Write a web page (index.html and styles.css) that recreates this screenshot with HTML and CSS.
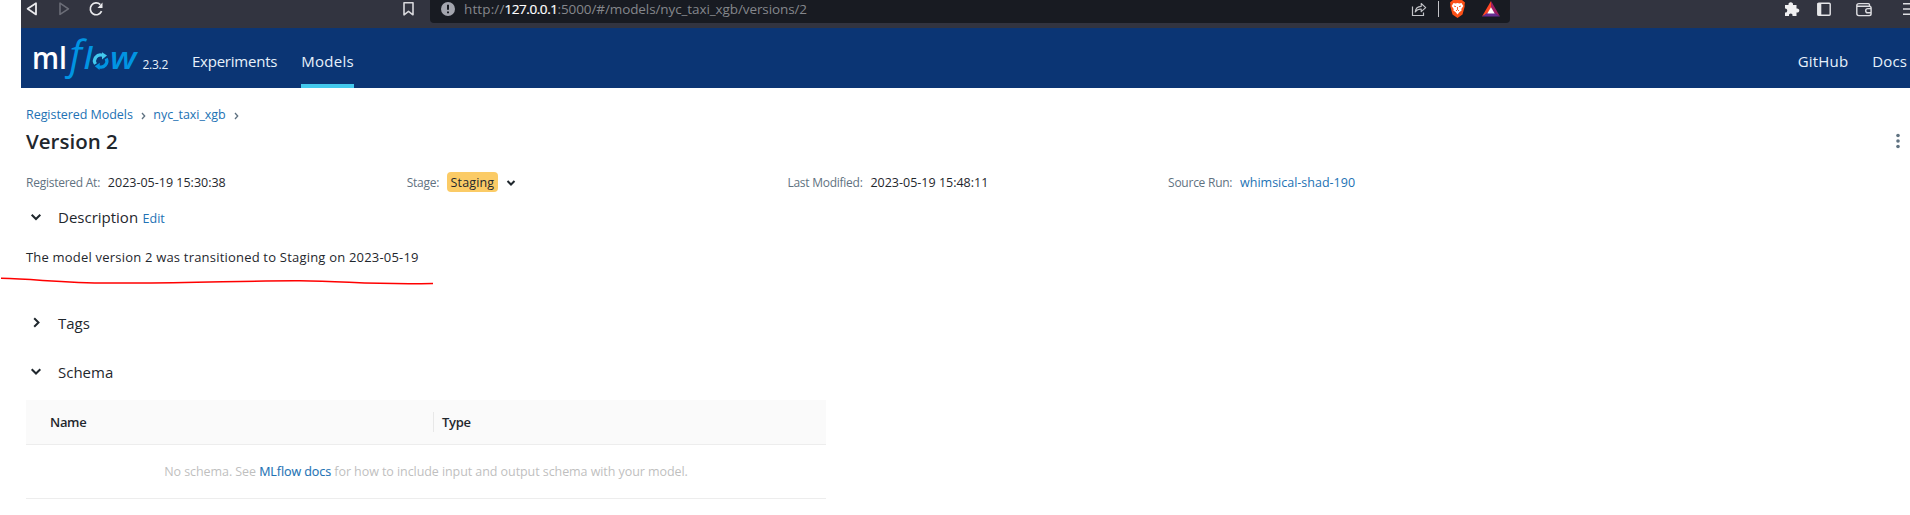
FILE: index.html
```html
<!DOCTYPE html>
<html lang="en">
<head>
<meta charset="utf-8">
<title>MLflow</title>
<link rel="stylesheet" href="styles.css">
</head>
<body>
<div class="app">
  <div class="browser">
    <svg class="browser-nav" width="409" height="28" viewBox="0 0 409 28" fill="none">
      <path d="M15 3.200v11.200L6.600 8.800z" stroke="#e9e9ec" stroke-width="1.800" stroke-linejoin="round"/>
      <path d="M39 3.200v11.200l8.400-5.600z" stroke="#6b6d77" stroke-width="1.600" stroke-linejoin="round"/>
      <path d="M79.300 4.600A5.900 5.900 0 1 0 80.600 11.200" stroke="#e9e9ec" stroke-width="1.700"/>
      <path d="M81.500 2.500v5.500h-5z" fill="#e9e9ec"/>
      <path d="M383 2.800h9v12l-4.500-3.500-4.500 3.500z" stroke="#d8d8dc" stroke-width="1.600" stroke-linejoin="round"/>
    </svg>
    <div class="address">
      <svg class="info" width="14" height="14" viewBox="0 0 14 14"><circle cx="7" cy="7" r="7" fill="#a3a5ae"/><path d="M7 2.800v5M7 9.500v1.800" stroke="#181b22" stroke-width="2"/></svg>
      <div class="url"><span class="t url-scheme">http://</span><span class="t url-host">127.0.0.1</span><span class="t url-path">:5000/#/models/nyc_taxi_xgb/versions/2</span></div>
      <svg class="address-icons" width="100" height="23" viewBox="0 0 100 23" fill="none">
        <path d="M2.500 6.500v9h11v-3" stroke="#c3c4c8" stroke-width="1.200"/>
        <path d="M5.200 12c.5-4 3-5.500 6-5.600V3.500l4.500 4.200-4.500 4V9c-2.500 0-4.500.8-6 3z" stroke="#c3c4c8" stroke-width="1.100" stroke-linejoin="round"/>
        <path d="M28.500 1v16" stroke="#c3c4c8"/>
        <path d="M43 0h9l3 2.500-.4 2 .1 2-2.200 8L47.500 18l-5-3.500-2.200-8 .1-2-.4-2z" fill="#fb5017"/>
        <path d="M43.500 3l2.200.4 1.800-.4 1.800.4 2.200-.4 1.800 3-2 3 .3 1.500-2.300 1.800-1.800 2.200-1.800-2.200-2.300-1.800.3-1.500-2-3z" fill="#fff"/>
        <path d="M44 6l2 .7M51 6l-2 .7M47.500 7v2.500L46 11M47.500 9.500L49 11" stroke="#fb5017" stroke-width=".9"/>
        <path d="M81 1l-9 15.500 9-5z" fill="#ff4724"/><path d="M81 1l9 15.500-9-5z" fill="#9e1f63"/><path d="M72 16.500h18l-9-6z" fill="#662d91"/><path d="M81 7.200l-3.700 6.300h7.400z" fill="#fff"/>
      </svg>
    </div>
    <svg class="browser-tools" width="130" height="28" viewBox="0 0 130 28" fill="none">
      <path d="M5 5h3.500c-.8-3.800 5.300-3.800 4.500 0h3.500v3.500c3.800-.5 3.800 4.500 0 4V16h-4c.5-3.200-4-3.200-3.500 0H5v-3.500c3 .5 3-4.500 0-4z" fill="#f0f0f2"/>
      <rect x="37.800" y="3.300" width="12.400" height="12" rx="1" stroke="#e6e6e9" stroke-width="1.400"/><path d="M37.500 3h3.800v12.500h-3.800z" fill="#e6e6e9"/>
      <path d="M89.500 6.500V4.800q0-1.200-1.200-1.200H79q-2.200 0-2.200 2v8q0 2 2 2h10.500q1.800 0 1.800-1.800V8q0-1.800-1.800-1.800H77.500" stroke="#dedee2" stroke-width="1.400"/><path d="M91 8.600h-3.200a2.100 2.100 0 0 0 0 4.200H91" stroke="#dedee2" stroke-width="1.400"/>
      <path d="M123 3.800h8M123 9h8M123 14.200h8" stroke="#dedee2" stroke-width="1.500"/>
    </svg>
  </div>

  <header class="header">
    <svg class="logo" width="106" height="60" viewBox="34 28 106 60">
      <text class="logo-ml" x="32" y="69" textLength="35" lengthAdjust="spacingAndGlyphs">ml</text>
      <text class="logo-f" x="69.500" y="69">f</text>
      <text class="logo-l" x="83.700" y="69">l</text>
      <g fill="none" stroke-width="3.200"><path d="M95.500 64A5.900 5.900 0 0 1 102.300 55.200" stroke="#43c9ed"/><path d="M106.200 58.500A5.900 5.900 0 0 1 98.800 66.700" stroke="#0194e2"/></g>
      <path d="M102 52.300l5 3.200-5 4z" fill="#43c9ed"/><path d="M99.500 70l-4.700-3.700 5-3.500z" fill="#0194e2"/>
      <text class="logo-w" x="110" y="69" textLength="26.500" lengthAdjust="spacingAndGlyphs">w</text>
    </svg>
    <span class="t release">2.3.2</span>
    <nav class="tabs"><a class="tab"><span class="t tab-exp">Experiments</span></a><a class="tab tab-active"><span class="t tab-models">Models</span></a></nav>
    <nav class="links"><span class="t link-gh">GitHub</span><span class="t link-docs">Docs</span></nav>
  </header>

  <main class="page">
    <div class="crumbs">
      <a class="t">Registered Models</a>
      <svg class="crumb-sep" width="5" height="8" viewBox="0 0 5 8"><path d="M1 1l2.700 3L1 7"/></svg>
      <a class="t">nyc_taxi_xgb</a>
      <svg class="crumb-sep" width="5" height="8" viewBox="0 0 5 8"><path d="M1 1l2.700 3L1 7"/></svg>
    </div>
    <div class="title-row">
      <h1 class="t title">Version 2</h1>
      <svg width="4" height="16" viewBox="0 0 4 16" fill="#5f7281"><circle cx="2" cy="2.500" r="1.800"/><circle cx="2" cy="8" r="1.800"/><circle cx="2" cy="13.500" r="1.800"/></svg>
    </div>
    <div class="meta">
      <div class="meta-item"><span class="t label">Registered At:</span><span class="t">2023-05-19 15:30:38</span></div>
      <div class="meta-item"><span class="t label">Stage:</span><span class="stage"><span class="t stage-text">Staging</span></span><svg class="chev" width="10" height="8" viewBox="0 0 10 8"><path d="M1.500 2L5 5.500 8.500 2"/></svg></div>
      <div class="meta-item"><span class="t label">Last Modified:</span><span class="t">2023-05-19 15:48:11</span></div>
      <div class="meta-item"><span class="t label">Source Run:</span><a class="t">whimsical-shad-190</a></div>
    </div>

    <div class="section section-desc"><svg class="chev" width="12" height="12" viewBox="0 0 12 12"><path d="M1.700 3.700L6 8l4.300-4.300"/></svg><span class="t">Description</span><a class="t edit">Edit</a></div>
    <div class="note">
      <span class="t note-text">The model version 2 was transitioned to Staging on 2023-05-19</span>
      <svg class="scribble" width="436" height="12" viewBox="0 0 436 12"><path d="M1 3.300C40 4.300 60 8 110 8C190 8.800 240 5.500 300 5.800C350 6.300 370 10 433 8.500"/></svg>
    </div>
    <div class="section section-tags"><svg class="chev" width="12" height="12" viewBox="0 0 12 12"><path d="M4.200 1.200L8.500 5.500l-4.300 4.300"/></svg><span class="t">Tags</span></div>
    <div class="section section-schema"><svg class="chev" width="12" height="12" viewBox="0 0 12 12"><path d="M1.700 3.200L6 7.500l4.300-4.300"/></svg><span class="t">Schema</span></div>

    <div class="schema">
      <div class="schema-head"><div class="th th-name"><span class="t">Name</span></div><div class="th"><span class="t">Type</span></div></div>
      <div class="schema-empty"><span class="t">No schema. See </span><a class="t docs-link">MLflow docs</a><span class="t"> for how to include input and output schema with your model.</span></div>
    </div>
  </main>
</div>
</body>
</html>
```
FILE: styles.css
```css
* { box-sizing: border-box; }
body { margin: 0; background: #fff; color: #1f272d; font: 13px "Open Sans", sans-serif; overflow: hidden; }
.app { padding-left: 21px; }
.t { white-space: pre; flex: none; }
a { color: #2272b4; text-decoration: none; }
svg { display: block; flex: none; }

.browser { display: flex; height: 28px; background: #323440; }
.address { display: flex; width: 1080px; height: 23px; background: #181b22; border-radius: 0 0 4px 4px; padding-left: 11px; }
.info { margin-top: 2px; }
.url { display: flex; margin-left: 9px; line-height: 18px; font-size: 13.5px; color: #85878c; }
.url-scheme { letter-spacing: .13px; }
.url-host { color: #fff; letter-spacing: -.44px; -webkit-text-stroke: .2px #fff; }
.url-path { letter-spacing: -.1px; }
.address-icons { margin-left: auto; }
.browser-tools { margin-left: 270px; }

.header { display: flex; height: 60px; background: #0b3574; padding: 0 3px 0 13px; color: #e7f1fb; }
.logo { overflow: visible; }
.logo-ml { font: 600 31px "Open Sans", sans-serif; fill: #fff; }
.logo-f { font: italic 500 40px "Open Sans", sans-serif; fill: #0194e2; }
.logo-l, .logo-w { font: italic 600 31px "Open Sans", sans-serif; fill: #0194e2; }
.release { margin-left: 2.5px; font-size: 12px; line-height: 73px; letter-spacing: -.28px; }
.tabs { display: flex; gap: 24px; margin-left: 24px; }
.tab { color: #e7f1fb; font-size: 15px; line-height: 66px; height: 60px; }
.tab-exp { letter-spacing: -.23px; }
.tab-active { border-bottom: 4px solid #43c9ed; width: 53px; }
.tab-models { letter-spacing: .3px; }
.links { display: flex; gap: 24px; margin-left: auto; font-size: 15px; line-height: 66px; }
.link-gh { letter-spacing: .2px; }
.link-docs { letter-spacing: .1px; }

.page { padding-left: 5px; }
.crumbs { display: flex; align-items: center; height: 20px; margin-top: 16px; padding-top: 1px; font-size: 12.5px; letter-spacing: -.05px; }
.crumb-sep { margin: 2px 7.5px 0 8px; fill: none; stroke: #5f7281; stroke-width: 1.3; }
.title-row { display: flex; justify-content: space-between; align-items: center; height: 34px; padding-right: 10px; }
.title { margin: 0; font-size: 20.5px; font-weight: 600; line-height: 28px; }
.meta { display: grid; grid-template-columns: repeat(4, 380.7px); height: 24px; margin-top: 12px; font-size: 12.5px; }
.meta-item { display: flex; align-items: center; gap: 7.8px; padding-top: 1px; }
.label { color: #5f7281; font-size: 12px; letter-spacing: -.25px; }
.stage { display: flex; justify-content: center; align-items: center; width: 51px; height: 20px; margin-top: -1px; padding-top: 1px; background: #fbcb66; border-radius: 4px; }
.stage-text { letter-spacing: .15px; }
.chev { fill: none; stroke: #1f272d; stroke-width: 2; }
.section { display: flex; align-items: center; height: 24px; padding-left: 4px; font-size: 15px; }
.section .chev { margin-right: 16px; }
.section-desc { margin-top: 11px; }
.edit { margin: 2px 0 0 4.5px; font-size: 12.5px; }
.note { position: relative; height: 20px; line-height: 20px; margin-top: 18px; }
.note-text { letter-spacing: .2px; }
.scribble { position: absolute; left: -26px; top: 28px; fill: none; stroke: #f00; stroke-width: 1.5; }
.section-tags { margin-top: 44px; }
.section-schema { margin-top: 25px; }
.schema { width: 800px; margin-top: 16px; }
.schema-head { display: flex; align-items: center; height: 45px; background: #fafafa; border-bottom: 1px solid #ededed; font-weight: 600; letter-spacing: -.3px; }
.th { height: 20px; line-height: 20px; padding-left: 8px; }
.th-name { width: 408px; padding-left: 24px; border-right: 1px solid #e8e8e8; }
.schema-empty { display: flex; justify-content: center; height: 54px; line-height: 53px; border-bottom: 1px solid #ededed; color: #bfbfbf; font-size: 12.5px; letter-spacing: -.07px; }
.docs-link { -webkit-text-stroke: .1px; }
```
